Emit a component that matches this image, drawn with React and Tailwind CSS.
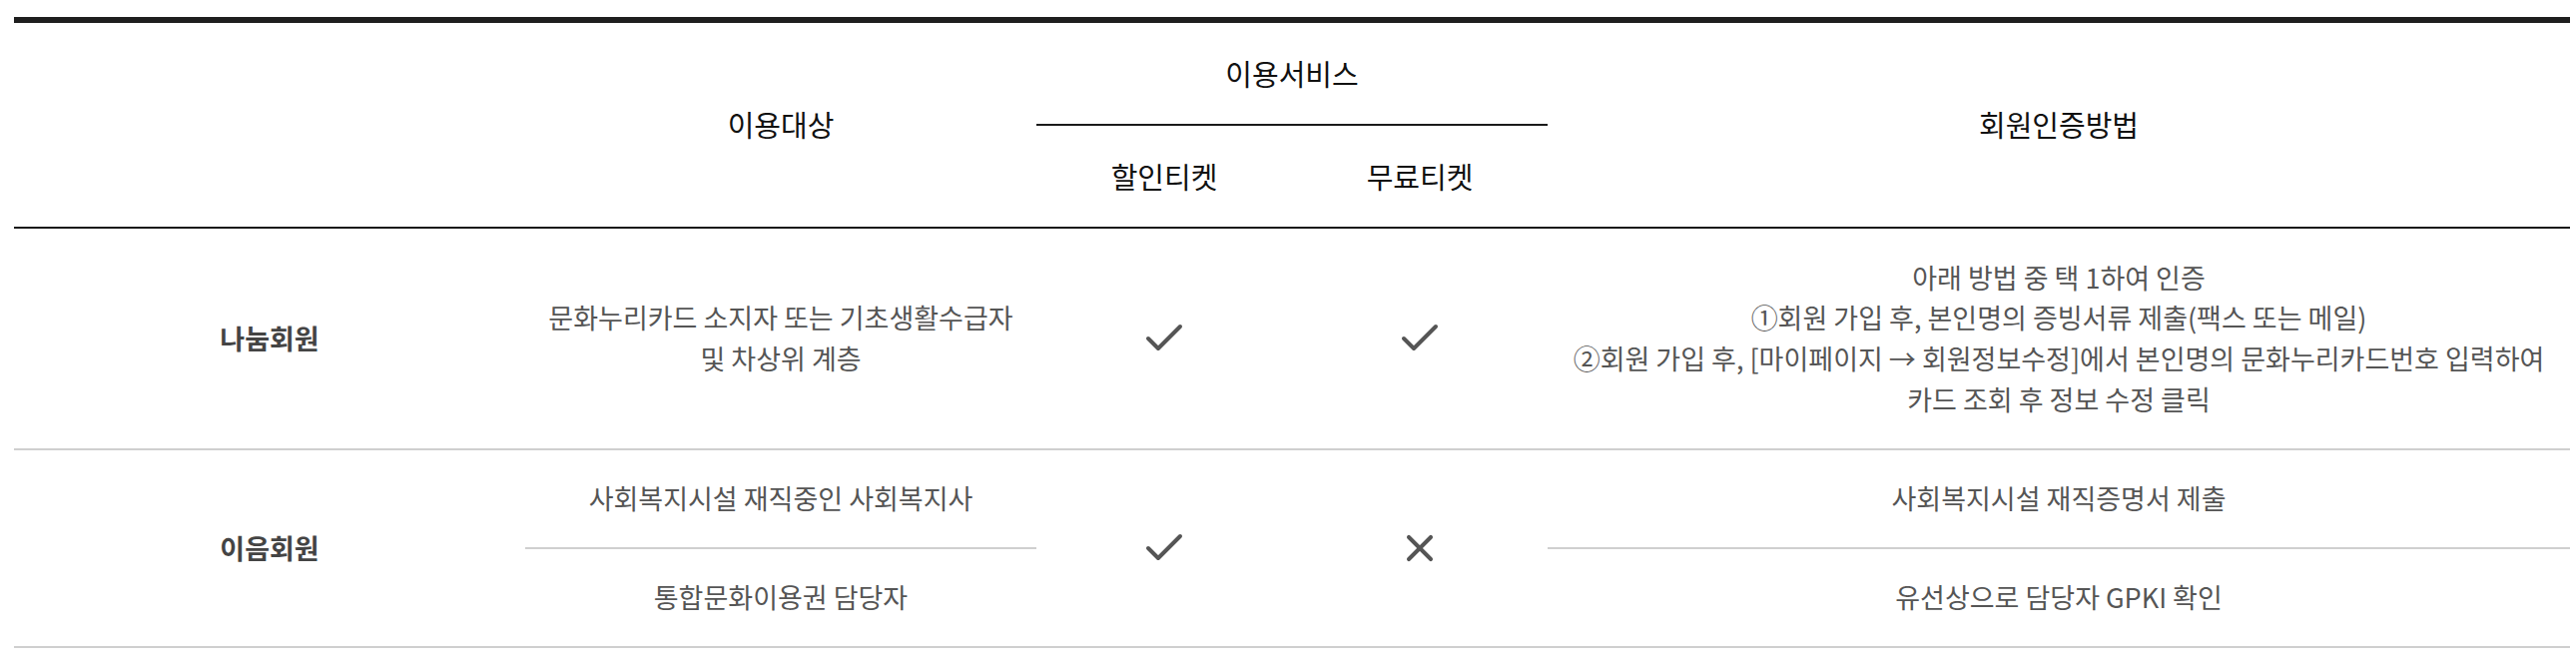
import React from 'react';
import { Check, X } from 'lucide-react';

const FONT = { fontFamily: '"Noto Sans CJK KR", "Noto Sans", sans-serif' };

function HeadCell({ children, className = '' }) {
  return (
    <div className={`flex items-center justify-center text-[29px] font-normal text-[#111] ${className}`}>
      {children}
    </div>
  );
}

function Cell({ children, className = '' }) {
  return (
    <div className={`flex items-center justify-center text-center text-[27px] leading-[40.7px] text-[#555] ${className}`}>
      {children}
    </div>
  );
}

function Label({ children, className = '' }) {
  return (
    <div className={`flex items-center justify-center text-[27px] font-semibold text-[#444] ${className}`}>
      {children}
    </div>
  );
}

const COLS = 'grid grid-cols-[512px_512px_256px_256px_1024px]';

export default function App() {
  return (
    <div className="min-h-[664px] bg-white pt-[17px] pl-[14px]" style={FONT}>
      <div className="w-[2560px] border-t-[6px] border-[#1e1e1e]">
        {/* header */}
        <div className={`${COLS} grid-rows-[103px_101px] border-b-2 border-[#1a1a1a]`}>
          <HeadCell className="row-span-2" />
          <HeadCell className="row-span-2">이용대상</HeadCell>
          <HeadCell className="col-span-2 border-b-2 border-[#1a1a1a]">이용서비스</HeadCell>
          <HeadCell className="row-span-2">회원인증방법</HeadCell>
          <HeadCell>할인티켓</HeadCell>
          <HeadCell>무료티켓</HeadCell>
        </div>

        {/* 나눔회원 */}
        <div className={`${COLS} h-[222px] border-b-2 border-[#cfcfcf]`}>
          <Label>나눔회원</Label>
          <Cell>
            <p>
              문화누리카드 소지자 또는 기초생활수급자
              <br />및 차상위 계층
            </p>
          </Cell>
          <Cell>
            <Check size={48} strokeWidth={2} className="text-[#555]" />
          </Cell>
          <Cell>
            <Check size={48} strokeWidth={2} className="text-[#555]" />
          </Cell>
          <Cell>
            <p>
              아래 방법 중 택 1하여 인증
              <br />①회원 가입 후, 본인명의 증빙서류 제출(팩스 또는 메일)
              <br />②회원 가입 후, [마이페이지 → 회원정보수정]에서 본인명의 문화누리카드번호 입력하여
              <br />카드 조회 후 정보 수정 클릭
            </p>
          </Cell>
        </div>

        {/* 이음회원 */}
        <div className={`${COLS} grid-rows-[99px_97px] border-b-2 border-[#cfcfcf]`}>
          <Label className="row-span-2">이음회원</Label>
          <Cell className="border-b-2 border-[#cfcfcf]">사회복지시설 재직중인 사회복지사</Cell>
          <Cell className="row-span-2">
            <Check size={48} strokeWidth={2} className="text-[#555]" />
          </Cell>
          <Cell className="row-span-2">
            <X size={44} strokeWidth={2.2} className="text-[#555]" />
          </Cell>
          <Cell className="border-b-2 border-[#cfcfcf]">사회복지시설 재직증명서 제출</Cell>
          <Cell>통합문화이용권 담당자</Cell>
          <Cell>유선상으로 담당자 GPKI 확인</Cell>
        </div>
      </div>
    </div>
  );
}
